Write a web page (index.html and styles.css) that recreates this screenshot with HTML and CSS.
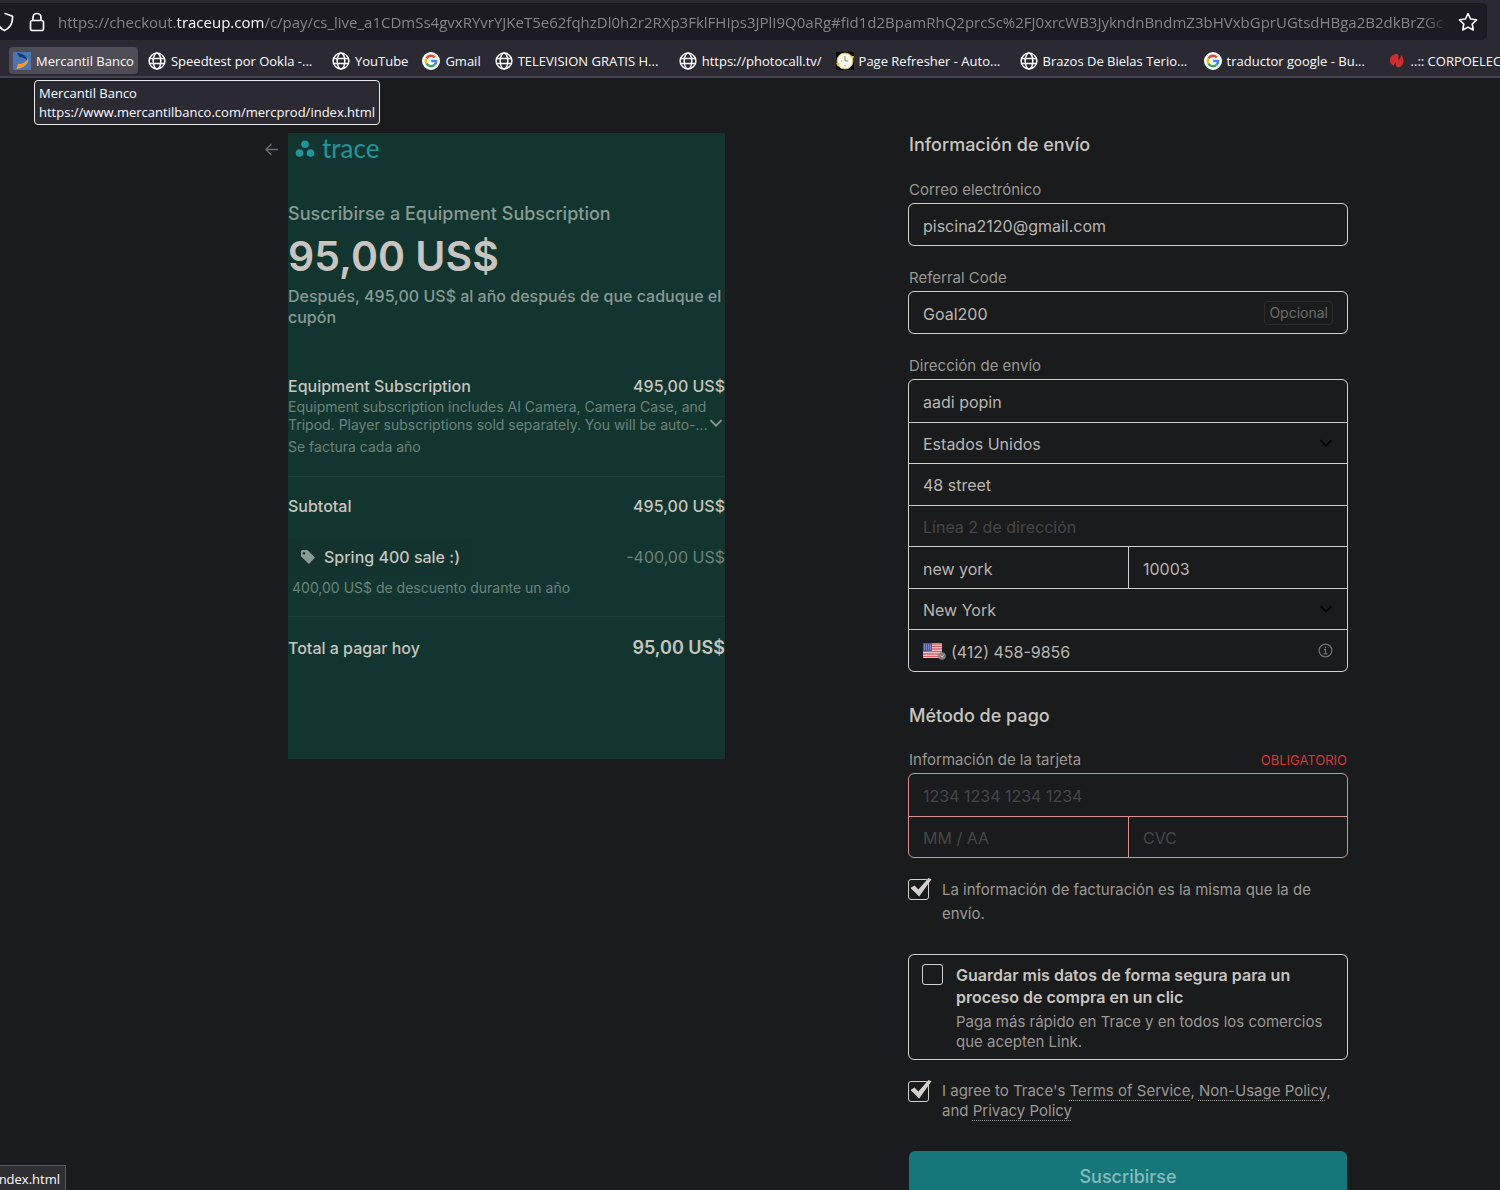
FILE: index.html
```
<!DOCTYPE html>
<html lang="es">
<head>
  <meta charset="UTF-8" />
  <meta name="viewport" content="width=device-width, initial-scale=1.0" />
  <title>Trace - Suscribirse</title>
  <link rel="stylesheet" href="styles.css">
</head>
<body>
  <!-- shared icons -->
  <svg class="defs" aria-hidden="true">
    <symbol id="globe" viewBox="0 0 18 18">
      <g fill="none" stroke="#fbfbfe" stroke-width="1.5"><circle cx="9" cy="9" r="7.9"/><ellipse cx="9" cy="9" rx="3.8" ry="7.9"/><path d="M1.5 6.6h15M1.5 11.4h15"/></g>
    </symbol>
    <symbol id="google" viewBox="0 0 18 18">
      <circle cx="9" cy="9" r="9" fill="#fff"/>
      <g fill="none" stroke-width="2.5"><path d="M4.4 6.5A5.2 5.2 0 0 1 12.8 5.4" stroke="#ea4335"/><path d="M4.4 6.5A5.2 5.2 0 0 0 4.4 11.5" stroke="#fbbc05"/><path d="M4.4 11.5A5.2 5.2 0 0 0 12.4 12.9" stroke="#34a853"/><path d="M9.2 9h5A5.2 5.2 0 0 1 12.4 12.9" stroke="#4285f4"/></g>
    </symbol>
    <symbol id="chevron" viewBox="0 0 14 14"><path d="M1.5 4.2 7 9.7l5.500-5.500" fill="none" stroke="currentColor" stroke-width="1.8"/></symbol>
    <symbol id="tick" viewBox="0 0 26 26">
      <path d="M3.500 13 7.500 10.500 11.400 14.500 21.500 3 24.500 4.200 12.200 21.500Z" fill="#d3d0cb"/>
    </symbol>
  </svg>

  <!-- BROWSER BARS -->
  <header class="browser">
    <div class="urlbar">
      <svg class="shield" viewBox="0 0 16 20" aria-hidden="true"><path d="M4.500 1.200 12.500 4.200C13 11 10.500 15.500 4.500 18.500 1 17-1.500 14-3 10" fill="none" stroke="#fbfbfe" stroke-width="1.700" stroke-linejoin="round"/></svg>
      <svg class="lock" viewBox="0 0 16 20" aria-hidden="true"><g fill="none" stroke="#fbfbfe" stroke-width="1.700"><rect x="1.500" y="8.500" width="13" height="10" rx="2"/><path d="M4 8.500V5.500a4 4 0 0 1 8 0v3"/></g></svg>
      <div class="url">https://checkout.<b>traceup.com</b>/c/pay/cs_live_a1CDmSs4gvxRYvrYJKeT5e62fqhzDl0h2r2RXp3FklFHIps3JPlI9Q0aRg#fid1d2BpamRhQ2prcSc%2FJ0xrcWB3JykndnBndmZ3bHVxbGprUGtsdHBga2B2dkBrZGc</div>
      <svg class="star" viewBox="0 0 20 20" aria-hidden="true"><path d="m10 1.500 2.600 5.500 6 .8-4.400 4.200 1.100 6L10 15.100 4.700 18l1.100-6L1.400 7.800l6-.8z" fill="none" stroke="#fbfbfe" stroke-width="1.600" stroke-linejoin="round"/></svg>
    </div>
    <nav class="bookmarks">
      <a class="bookmark active" href="#">
        <svg viewBox="0 0 18 18" aria-hidden="true"><path fill="#4a76b5" d="M0 0h18v18H0z"/><path d="M4 1c6 .5 10 3 10.500 8C12 6 9 5 6.500 5Z" fill="#123a7c"/><path d="M15 6c1 5-3 10-11.500 11L5 12c5 0 8-2 10-6Z" fill="#f79a31"/></svg>
        <span>Mercantil Banco</span></a>
      <a class="bookmark wide" href="#"><svg aria-hidden="true"><use href="#globe"/></svg><span>Speedtest por Ookla -...</span></a>
      <a class="bookmark" href="#"><svg aria-hidden="true"><use href="#globe"/></svg><span>YouTube</span></a>
      <a class="bookmark" href="#"><svg aria-hidden="true"><use href="#google"/></svg><span>Gmail</span></a>
      <a class="bookmark wide" href="#"><svg aria-hidden="true"><use href="#globe"/></svg><span>TELEVISION GRATIS H...</span></a>
      <a class="bookmark" href="#"><svg aria-hidden="true"><use href="#globe"/></svg><span>https://photocall.tv/</span></a>
      <a class="bookmark wide" href="#">
        <svg viewBox="0 0 18 18" aria-hidden="true"><path d="M0 0h18v18H0z"/><circle cx="9" cy="9" r="8" fill="#f8f6e6" stroke="#c9b45a"/><path d="M0 11h4l-2 4zM14 4h4l-1 4z" fill="#e8c83c"/><path d="M9 4v5h3M5 9h1M9 13v1" stroke="#8d8d8d" fill="none"/></svg>
        <span>Page Refresher - Auto...</span></a>
      <a class="bookmark wide" href="#"><svg aria-hidden="true"><use href="#globe"/></svg><span>Brazos De Bielas Terio...</span></a>
      <a class="bookmark wide" href="#"><svg aria-hidden="true"><use href="#google"/></svg><span>traductor google - Bu...</span></a>
      <a class="bookmark" href="#">
        <svg viewBox="0 0 18 18" aria-hidden="true"><path d="M2 9C2 4 5 2 9 2c2 1 2 3 1 6 2-1 3-3 3-5 3 2 4 9-1 12-3 1-5-1-4-5-2 1-2 3-2 4-2-1-4-3-4-5Z" fill="#d42b2b"/></svg>
        <span>..:: CORPOELEC</span></a>
    </nav>
  </header>

  <div class="tooltip" role="tooltip">Mercantil Banco<br>https://www.mercantilbanco.com/mercprod/index.html</div>

  <!-- CHECKOUT -->
  <main class="checkout">
    <section class="overview">
      <a class="back" href="#" aria-label="Volver"><svg viewBox="0 0 16 16" aria-hidden="true"><path d="M15 8H2M8 2 2 8l6 6" fill="none" stroke="currentColor" stroke-width="1.500"/></svg></a>
      <div class="summary">
        <div class="logo">
          <svg viewBox="0 0 20 18" aria-hidden="true"><g fill="#1c989c"><circle cx="10" cy="4.300" r="3.800"/><circle cx="4.500" cy="13" r="3.800"/><circle cx="15.500" cy="13" r="3.800"/></g></svg>
          <span>trace</span>
        </div>
        <h1>Suscribirse a Equipment Subscription</h1>
        <p class="price">95,00 US$</p>
        <p class="after">Después, 495,00 US$ al año después de que caduque el cupón</p>

        <div class="row item"><span>Equipment Subscription</span><span>495,00 US$</span></div>
        <div class="desc">
          <p>Equipment subscription includes AI Camera, Camera Case, and<br>Tripod. Player subscriptions sold separately. You will be auto-...</p>
          <svg aria-hidden="true"><use href="#chevron"/></svg>
        </div>
        <p class="billing">Se factura cada año</p>

        <div class="row subtotal"><span>Subtotal</span><span>495,00 US$</span></div>
        <div class="row coupon">
          <span class="tag">
            <svg viewBox="0 0 16 16" aria-hidden="true"><path fill-rule="evenodd" d="M1 2.500A1.500 1.500 0 0 1 2.500 1h5L15 8.500 9 15 1 7.500ZM4 3a1.300 1.300 0 1 0 .01 0Z" fill="#8c9a95"/></svg>
            Spring 400 sale :)</span>
          <span class="discount">-400,00 US$</span>
        </div>
        <p class="coupon-note">400,00 US$ de descuento durante un año</p>

        <div class="row total"><span>Total a pagar hoy</span><strong>95,00 US$</strong></div>
      </div>
    </section>

    <form class="payment" onsubmit="return false">
      <h2>Información de envío</h2>
      <label class="label" for="email">Correo electrónico</label>
      <div class="box"><input id="email" type="text" value="piscina2120@gmail.com"></div>

      <label class="label" for="referral">Referral Code</label>
      <div class="box"><input id="referral" type="text" value="Goal200"><span class="optional">Opcional</span></div>

      <label class="label" for="name">Dirección de envío</label>
      <div class="group address">
        <div class="cell"><input id="name" type="text" value="aadi popin"></div>
        <div class="cell"><select aria-label="País"><option>Estados Unidos</option></select><svg class="arrow" aria-hidden="true"><use href="#chevron"/></svg></div>
        <div class="cell"><input type="text" aria-label="Línea 1 de dirección" value="48 street"></div>
        <div class="cell"><input type="text" aria-label="Línea 2 de dirección" placeholder="Línea 2 de dirección"></div>
        <div class="cell half"><input type="text" aria-label="Ciudad" value="new york"></div>
        <div class="cell half"><input type="text" aria-label="Código postal" value="10003"></div>
        <div class="cell"><select aria-label="Estado"><option>New York</option></select><svg class="arrow" aria-hidden="true"><use href="#chevron"/></svg></div>
        <div class="cell phone">
          <svg class="flag" viewBox="0 0 24 18" aria-hidden="true">
            <rect width="19" height="15" y="1" rx="1" fill="#f3e4e4"/>
            <path d="M0 2h19M0 4.500h19M0 7h19M0 9.500h19M0 12h19M0 14.500h19" stroke="#dc5a60" stroke-width="1.300"/>
            <path d="M0 1h9v8H0z" fill="#4b55a0"/>
            <path d="M1 3h8M1 5h8M1 7h8" stroke="#c5c8e2" stroke-width=".8" stroke-dasharray="1 1"/>
            <circle cx="19" cy="14" r="3.800" fill="#7d7d7d"/><path d="m17.300 13.300 1.700 1.700 1.700-1.700" fill="none" stroke="#ccc"/>
          </svg>
          <input type="tel" aria-label="Teléfono" value="(412) 458-9856">
          <svg class="info" viewBox="0 0 16 16" aria-hidden="true"><g fill="none" stroke="#74726f" stroke-width="1.300"><circle cx="8" cy="8" r="6.800"/><path d="M6.300 7H8v4.500M6 11.500h4M8 4v1.500"/></g></svg>
        </div>
      </div>

      <h2 class="method">Método de pago</h2>
      <div class="row card-head"><label class="label" for="card">Información de la tarjeta</label><span class="required">OBLIGATORIO</span></div>
      <div class="group card">
        <div class="cell"><input id="card" type="text" placeholder="1234 1234 1234 1234"></div>
        <div class="cell half"><input type="text" aria-label="Vencimiento" placeholder="MM / AA"></div>
        <div class="cell half"><input type="text" aria-label="CVC" placeholder="CVC"></div>
      </div>

      <div class="check same">
        <span class="tickbox"><input id="same" type="checkbox" checked><svg aria-hidden="true"><use href="#tick"/></svg></span>
        <label for="same">La información de facturación es la misma que la de envío.</label>
      </div>

      <div class="check save">
        <span class="tickbox"><input id="save" type="checkbox"></span>
        <label for="save"><strong>Guardar mis datos de forma segura para un proceso de compra en un clic</strong>
          <small>Paga más rápido en Trace y en todos los comercios que acepten Link.</small></label>
      </div>

      <div class="check agree">
        <span class="tickbox"><input id="agree" type="checkbox" checked><svg aria-hidden="true"><use href="#tick"/></svg></span>
        <label for="agree">I agree to Trace's <a href="#">Terms of Service</a>, <a href="#">Non-Usage Policy</a>, and <a href="#">Privacy Policy</a></label>
      </div>

      <button class="submit" type="submit">Suscribirse</button>
    </form>
  </main>

  <div class="status">index.html</div>
</body>
</html>
```
FILE: styles.css
```
*{box-sizing:border-box}
body{margin:0;height:100vh;display:flex;flex-direction:column;overflow:hidden;background:#1a1b1d;color:#c8c5c0;font-family:Inter,sans-serif;font-size:16px}
h1,h2,p{margin:0}
.defs{position:absolute;width:0;height:0}

/* browser bars */
.browser{flex:none;background:#2b2a33;border-bottom:2px solid #44434d;padding-top:3px;font-family:"Open Sans","Noto Sans",sans-serif;color:#fbfbfe}
.urlbar{display:flex;align-items:center;height:37px;margin-right:13px;padding-right:9px;background:#1c1b22;border-radius:0 5px 5px 0}
.urlbar svg{flex:none;height:20px}
.shield{width:16px;margin-right:13px}
.lock{width:16px;margin-right:13px}
.star{width:20px;margin-left:8px}
.url{flex:1;min-width:0;overflow:hidden;white-space:nowrap;font-size:15px;line-height:24px;color:#85848b;-webkit-mask-image:linear-gradient(90deg,#000 98%,transparent);mask-image:linear-gradient(90deg,#000 98%,transparent)}
.url b{font-weight:400;color:#fbfbfe}
.bookmarks{display:flex;gap:6px;height:36px;padding:7px 0 2px 9px;overflow:hidden}
.bookmark{flex:none;display:flex;align-items:center;gap:5px;height:27px;padding:0 4px;border-radius:4px;color:#fbfbfe;font-size:13px;white-space:nowrap;text-decoration:none}
.bookmark svg{flex:none;width:18px;height:18px}
.bookmark.active{background:#4e4d56}
.bookmark.wide{width:178px}
.tooltip{position:absolute;left:34px;top:80px;z-index:2;padding:3px 4px 2px;border:1px solid #e8e8ea;border-radius:4px;background:#2b2a33;color:#fbfbfe;font:13px/19px "Open Sans","Noto Sans",sans-serif;white-space:nowrap}
.status{position:fixed;left:0;bottom:0;width:66px;height:25px;display:flex;justify-content:flex-end;padding-right:5px;overflow:hidden;border:1px solid #5b5a62;border-width:1px 1px 0 0;background:#2f2f33;color:#fbfbfe;font:13px/26px "Open Sans","Noto Sans",sans-serif}

/* layout */
.checkout{flex:1;min-height:0;display:flex;justify-content:center;align-items:flex-start;gap:183px;padding:55px 0 0 112px;overflow:hidden}
.overview{flex:0 1 461px;display:flex;align-items:flex-start}
.payment{flex:0 1 440px}
.row{display:flex;justify-content:space-between;align-items:center}

/* summary */
.back{flex:none;width:24px;height:32px;display:flex;align-items:center;color:#6d6b69}
.back svg{width:15px;height:15px}
.summary{flex:1;min-width:0;padding-bottom:99px;background:#12362f}
.logo{display:flex;align-items:center;gap:7px;height:32px;padding-left:7px;color:#1c989c;font-family:Lato,sans-serif;font-size:26px;line-height:30px}
.logo svg{width:20px;height:18px}
.logo span{padding-bottom:2px}
.summary h1{margin-top:37px;font-size:18px;line-height:24px;font-weight:500;color:#8b9994}
.price{margin-top:4px;font-size:41px;line-height:52px;font-weight:600;color:#c8c5c0}
.after{margin-top:4px;font-size:16px;line-height:21px;font-weight:500;color:#8b9994}
.item{margin-top:48px;line-height:20px;font-weight:500}
.desc{display:flex;align-items:flex-end;margin-top:2px;font-size:14px;line-height:18px;color:#6d827b}
.desc p{flex:1;min-width:0;white-space:nowrap}
.desc svg{flex:none;width:14px;height:14px;margin:0 2px 4px 0;color:#8b9994}
.billing{margin-top:4px;padding-bottom:20px;border-bottom:1px solid #1c3f38;font-size:14px;line-height:18px;color:#6d827b}
.subtotal{margin-top:19px;line-height:20px;font-weight:500}
.coupon{margin-top:22px}
.tag{display:flex;align-items:center;gap:8px;height:38px;padding:0 12px;border-radius:4px;background:#12332e;font-weight:500}
.tag svg{width:16px;height:16px}
.discount{color:#6d827b}
.coupon-note{margin-top:3px;padding:0 0 19px 4px;border-bottom:1px solid #1c3f38;font-size:14px;line-height:18px;color:#6d827b}
.total{margin-top:19px;line-height:24px;font-weight:500}
.total strong{font-size:18px;font-weight:600}

/* form */
.payment h2{margin-bottom:23px;padding-left:1px;font-size:18px;line-height:24px;font-weight:500}
.payment h2.method{margin:32px 0 22px}
.label{display:block;margin-bottom:3px;padding-left:1px;font-size:15px;line-height:20px;color:#9b9893}
.card-head{align-items:flex-start}
.required{padding-right:1px;font-size:13px;line-height:20px;color:#d8352f}
.box{display:flex;align-items:center;height:43px;margin-bottom:22px;padding:0 14px;border:1px solid #d0cfcc;border-radius:6px}
.optional{padding:0 4px;border:1px solid #2b2c2e;border-radius:4px;font-size:14px;line-height:22px;color:#6d6b69}
input,select{font:inherit;color:#b9b6b1}
input[type=text],input[type=tel],select{flex:1;min-width:0;width:100%;height:100%;padding:2px 0 0;border:0;outline:0;background:none;appearance:none}
::placeholder{color:#464648;opacity:1}
.group{display:grid;grid-template-columns:1fr 1fr;grid-auto-rows:1fr;border:1px solid #d0cfcc;border-radius:6px}
.address{min-height:293px}
.card{min-height:85px;border-color:#d98f8b}
.cell{grid-column:1/-1;display:flex;align-items:center;min-width:0;padding:0 14px;border-top:1px solid #d0cfcc}
.cell:first-child{border-top:0}
.half{grid-column:auto}
.half + .half{border-left:1px solid #d0cfcc}
.card .cell{border-color:#d98f8b}
.arrow{flex:none;width:14px;height:14px;color:#050505}
.flag{flex:none;width:24px;height:18px;margin-right:4px}
.info{flex:none;width:15px;height:15px}

.check{display:flex;align-items:flex-start;font-size:15px;color:#9b9893}
.check label{flex:1}
.tickbox{position:relative;flex:none;width:21px;height:21px;margin-right:13px}
.tickbox input{display:block;width:21px;height:21px;margin:0;border:1px solid #d0cfcc;border-radius:3px;appearance:none}
.tickbox svg{position:absolute;left:-1px;top:-4px;width:26px;height:26px}
.same{margin-top:20px;line-height:24px}
.same .tickbox{margin-top:1px}
.save{margin-top:28px;padding:9px 12px 7px 13px;border:1px solid #d0cfcc;border-radius:6px}
.save strong{display:block;font-size:16px;line-height:22px;font-weight:600;color:#c8c5c0}
.save small{display:block;margin-top:4px;font-size:15px;line-height:20px}
.agree{margin-top:21px;line-height:20px}
.agree a{color:inherit;text-decoration:underline dotted 1px;text-underline-offset:4px}
.submit{display:block;width:calc(100% - 2px);height:50px;margin:30px 1px 0;border:0;border-radius:6px;background:#15777a;color:#85bcbc;font:500 18px Inter,sans-serif}
```
